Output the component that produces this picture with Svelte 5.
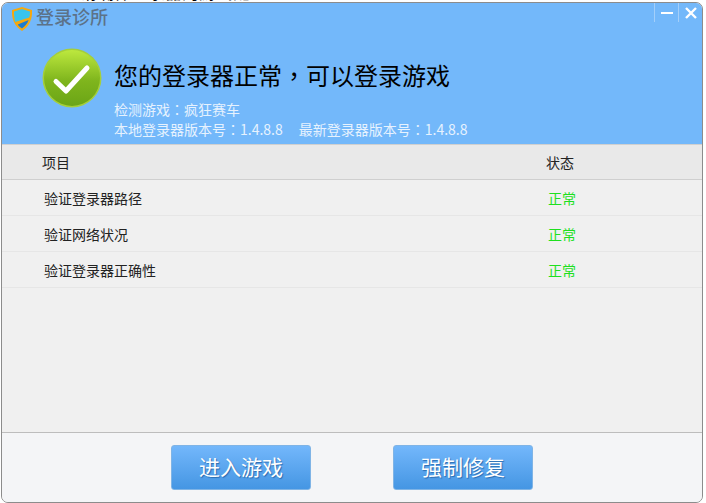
<script>
    const checks = ['验证登录器路径', '验证网络状况', '验证登录器正确性'];
</script>

<main>
    <div class="behind" aria-hidden="true"><span class="num">4</span>请确保登录器的游戏配置</div>
    <div class="window">
        <header>
            <div class="titlebar">
                <svg class="shield" viewBox="0 0 20 24" width="20" height="24">
                    <path d="M10 0 L20 3 C20.5 11 18 19 10 24 C2 19 -0.5 11 0 3 Z" fill="#f5a80f" />
                    <path d="M10 2 L18 4.4 C18 7 17.8 9 17.2 10.6 L3.2 15 C2.2 11.5 2 8 2 4.4 Z" fill="#38c4ee" />
                    <path d="M16.6 13 C15.4 16.4 13.4 19 10 21.4 C8.2 20.2 6.8 19 5.8 17.4 Z" fill="#1c7cd0" />
                </svg>
                <span class="app-name">登录诊所</span>
                <div class="controls">
                    <span class="ctl">
                        <svg viewBox="0 0 12 12" width="12" height="12"><path d="M0 6h12" stroke="#fff" stroke-width="2" /></svg>
                    </span>
                    <span class="ctl">
                        <svg viewBox="0 0 12 12" width="12" height="12"><path d="M1 1l10 10M11 1L1 11" stroke="#fff" stroke-width="2.4" /></svg>
                    </span>
                </div>
            </div>
            <div class="summary">
                <div class="badge">
                    <svg viewBox="0 0 60 60" width="60" height="60">
                        <defs>
                            <linearGradient id="ball" x1="0" y1="0" x2="0" y2="1">
                                <stop offset="0" stop-color="#bde83e" />
                                <stop offset="0.55" stop-color="#7fb51d" />
                                <stop offset="1" stop-color="#6ba516" />
                            </linearGradient>
                        </defs>
                        <circle cx="30" cy="30" r="29.5" fill="#a5cf3a" />
                        <circle cx="30" cy="30" r="28" fill="url(#ball)" />
                        <path d="M14 33.5l10 9.5L45 20" fill="none" stroke="#fff" stroke-width="5" stroke-linecap="round" stroke-linejoin="round" />
                    </svg>
                </div>
                <div class="summary-text">
                    <h1>您的登录器正常<span class="punct">，</span>可以登录游戏</h1>
                    <p class="game">检测游戏<span class="punct">：</span>疯狂赛车</p>
                    <p class="versions"><span>本地登录器版本号<i class="punct">：</i>1.4.8.8</span><span>最新登录器版本号<i class="punct">：</i>1.4.8.8</span></p>
                </div>
            </div>
        </header>

        <section class="table">
            <div class="table-head">
                <span class="col-name">项目</span>
                <span class="col-state">状态</span>
            </div>
            {#each checks as check}
                <div class="row">
                    <span class="col-name">{check}</span>
                    <span class="col-state ok">正常</span>
                </div>
            {/each}
        </section>

        <footer>
            <button>进入游戏</button>
            <button>强制修复</button>
        </footer>
    </div>
</main>

<style>
    :global(body) {
        background: #fff;
    }

    main {
        width: 706px;
        height: 503px;
        position: relative;
        overflow: hidden;
        font-family: "Noto Sans CJK SC", "Liberation Sans", sans-serif;
    }

    .behind {
        position: absolute;
        left: 80px;
        top: -17px;
        font-size: 17px;
        line-height: 17px;
        color: #000;
    }

    .num {
        position: absolute;
        left: -30px;
    }

    .window {
        position: absolute;
        left: 1px;
        top: 2px;
        width: 700px;
        height: 499px;
        border: 1px solid #8c8c8c;
        border-radius: 7px;
        overflow: hidden;
        background: #f0f0f0;
        display: flex;
        flex-direction: column;
    }

    header {
        height: 141px;
        background: #73b8fa;
        flex: none;
    }

    .titlebar {
        display: flex;
        align-items: center;
        height: 29px;
        padding-left: 10px;
    }

    .shield {
        margin-right: 4px;
        margin-top: 3px;
    }

    .app-name {
        font-size: 18px;
        color: #5c7288;
        font-weight: 500;
        margin-top: -3px;
    }

    .controls {
        margin-left: auto;
        align-self: flex-start;
        display: flex;
    }

    .ctl {
        width: 24px;
        height: 19px;
        box-sizing: border-box;
        border-left: 1px solid #a3cffa;
        display: flex;
        align-items: center;
        justify-content: center;
    }

    .summary {
        display: flex;
        align-items: flex-start;
        padding: 16px 0 0 40px;
    }

    .badge {
        height: 60px;
        margin-right: 12px;
    }

    .summary-text {
        padding-top: 12px;
    }

    .punct {
        font-family: "Noto Sans CJK TC", sans-serif;
        font-style: normal;
    }

    h1 {
        margin: 0;
        font-size: 24px;
        line-height: 30px;
        font-weight: 400;
        color: #000;
    }

    p {
        margin: 0;
        font-size: 14px;
        line-height: 20px;
        color: #e6f2fe;
    }

    .game {
        margin-top: 9px;
    }

    .versions span + span {
        margin-left: 16px;
    }

    .table {
        flex: 1;
    }

    .table-head,
    .row {
        display: flex;
        align-items: center;
        font-size: 14px;
        color: #222;
    }

    .table-head {
        height: 36px;
        background: #e9e9e9;
        border-top: 1px solid #d0d0d0;
        border-bottom: 1px solid #cfcfcf;
        box-sizing: border-box;
    }

    .row {
        height: 36px;
        border-bottom: 1px solid #e6e6e6;
        box-sizing: border-box;
    }

    .col-name {
        width: 504px;
        padding-left: 40px;
    }

    .row .col-name {
        padding-left: 42px;
    }

    .ok {
        color: #1ee01e;
    }

    footer {
        height: 70px;
        flex: none;
        box-sizing: border-box;
        border-top: 1px solid #bdbdbd;
        background: #f4f5f7;
        display: flex;
        padding: 12px 0 0 169px;
        gap: 82px;
    }

    button {
        width: 140px;
        height: 45px;
        border: 1px solid #7fb4e6;
        border-radius: 3px;
        background: linear-gradient(#73b7fb, #4596e3);
        color: #fff;
        font-family: inherit;
        font-size: 21px;
        padding: 0 0 3px;
        text-shadow: 1px 1px 1px #2a6cb0;
    }
</style>
